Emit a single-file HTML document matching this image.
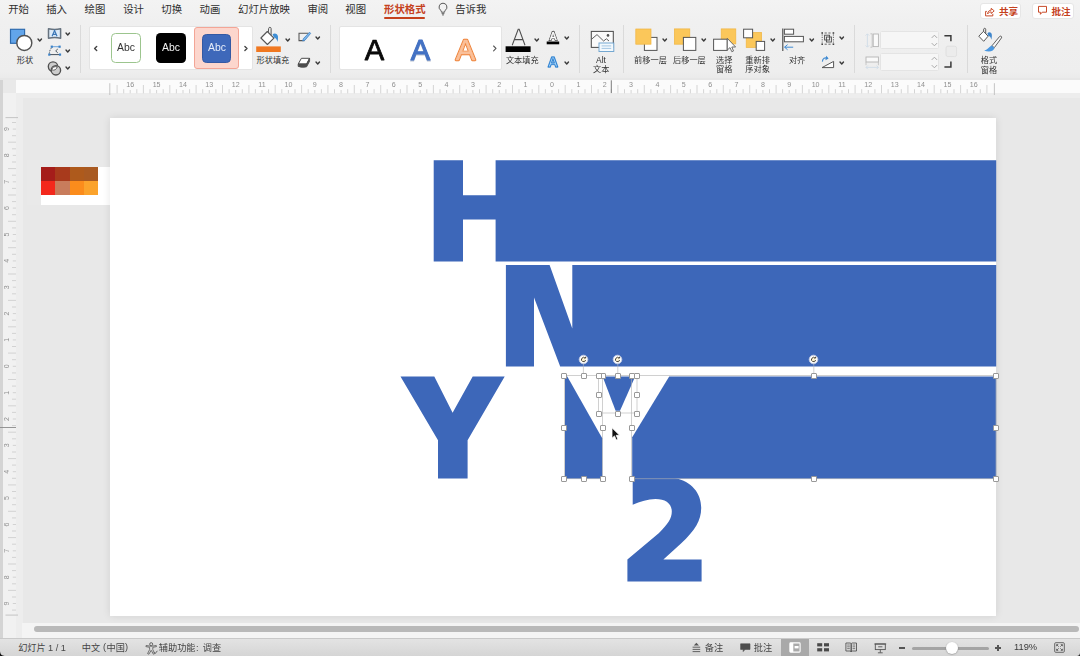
<!DOCTYPE html>
<html lang="zh-CN"><head><meta charset="utf-8"><title>PowerPoint</title>
<style>
*{box-sizing:border-box;margin:0;padding:0}
html,body{width:1080px;height:656px;overflow:hidden;background:#e8e8e8;font-family:"Liberation Sans",sans-serif}
#app{position:relative;width:1080px;height:656px;overflow:hidden;background:#e8e8e8}
.a{position:absolute;display:block}
.l{white-space:nowrap;will-change:transform}
svg.tx{will-change:transform}
svg{overflow:visible}
#tabs{left:0;top:0;width:1080px;height:22px;background:linear-gradient(#f3f3f3,#f0f0f0)}
#ribbon{left:0;top:22px;width:1080px;height:56px;background:linear-gradient(#f0f0f0 0,#eeeeee 88%,#ebebeb 100%)}
#ribbonedge{left:0;top:78.4px;width:1080px;height:1.6px;background:#e7e7e7}
#hruler{left:16px;top:79.9px;width:1064px;height:13.6px;background:#fbfbfb}
#rcorner{left:0;top:79.9px;width:16px;height:13.6px;background:#e9e9e9}
#vruler{left:3px;top:93px;width:13px;height:545px;background:#f1f1f1}
#vedge{left:0;top:80px;width:3px;height:558px;background:#d4d4d4}
#gutter{left:16px;top:93px;width:7px;height:545px;background:#ededed}
#gutterh{left:16px;top:93px;width:1064px;height:5px;background:#ededed}
#canvas{left:22.5px;top:98px;width:1057.5px;height:525.4px;background:#e8e8e8}
#slide{left:110px;top:117.8px;width:886.2px;height:497.9px;background:#fff;box-shadow:0 0 8px rgba(0,0,0,.10);overflow:hidden}
#hscroll{left:22px;top:623.4px;width:1058px;height:15px;background:#f4f4f4}
#hthumb{left:34px;top:626.2px;width:1044.6px;height:6px;border-radius:3px;background:#b9b9b9}
#status{left:0;top:638px;width:1080px;height:18px;background:linear-gradient(#e3e3e3,#d5d5d5);border-top:1px solid #c9c9c9}
.sep{width:1px;background:#dadada;top:25px;height:48px}
.panel{background:#fff;border:1px solid #e4e4e4;border-radius:2px}
.btn{background:#fff;border:1px solid #e6e6e6;border-radius:3px}
.h{width:6px;height:6px;background:#fff;border:1px solid #999;border-radius:1px}
.c{white-space:nowrap;font-family:"Liberation Sans","Noto Sans CJK SC",sans-serif}

</style></head>
<body>
<div id="app">
<div id="tabs" class="a"></div>
<div id="ribbon" class="a"></div>
<div id="ribbonedge" class="a"></div>
<div id="hruler" class="a"></div><div id="rcorner" class="a"></div>
<div id="vedge" class="a"></div><div id="vruler" class="a"></div>
<div id="gutter" class="a"></div><div id="gutterh" class="a"></div>
<div id="canvas" class="a"></div>
<span class="a c" style="left:8.20px;top:3.42px;width:20.80px;height:13.52px;font-size:10.4px;line-height:13.52px;color:#2e2e2e">开始</span>
<span class="a c" style="left:46.20px;top:3.42px;width:20.80px;height:13.52px;font-size:10.4px;line-height:13.52px;color:#2e2e2e">插入</span>
<span class="a c" style="left:84.60px;top:3.42px;width:20.80px;height:13.52px;font-size:10.4px;line-height:13.52px;color:#2e2e2e">绘图</span>
<span class="a c" style="left:123.20px;top:3.42px;width:20.80px;height:13.52px;font-size:10.4px;line-height:13.52px;color:#2e2e2e">设计</span>
<span class="a c" style="left:161.30px;top:3.42px;width:20.80px;height:13.52px;font-size:10.4px;line-height:13.52px;color:#2e2e2e">切换</span>
<span class="a c" style="left:199.60px;top:3.42px;width:20.80px;height:13.52px;font-size:10.4px;line-height:13.52px;color:#2e2e2e">动画</span>
<span class="a c" style="left:238.00px;top:3.42px;width:52.00px;height:13.52px;font-size:10.4px;line-height:13.52px;color:#2e2e2e">幻灯片放映</span>
<span class="a c" style="left:307.40px;top:3.42px;width:20.80px;height:13.52px;font-size:10.4px;line-height:13.52px;color:#2e2e2e">审阅</span>
<span class="a c" style="left:345.30px;top:3.42px;width:20.80px;height:13.52px;font-size:10.4px;line-height:13.52px;color:#2e2e2e">视图</span>
<span class="a c" style="left:384.00px;top:3.42px;width:41.40px;height:13.52px;font-size:10.4px;line-height:13.52px;color:#c5411d;font-weight:bold">形状格式</span>
<div class="a" style="left:384.2px;top:17.3px;width:41.2px;height:2.2px;background:#c5411d;border-radius:1px"></div>
<svg class="a" style="left:437px;top:2.3px" width="12" height="14" viewBox="0 0 12 14"><path d="M6 1.2A3.9 3.9 0 0 0 3.6 8.2C4.2 8.8 4.4 9.4 4.4 10.2H7.6C7.6 9.4 7.8 8.8 8.4 8.2A3.9 3.9 0 0 0 6 1.2Z" fill="none" stroke="#5a5a5a" stroke-width="1"/><path d="M4.6 11.6H7.4M5 12.9H7" stroke="#5a5a5a" stroke-width="0.9" fill="none"/></svg>
<span class="a c" style="left:455.20px;top:3.42px;width:31.20px;height:13.52px;font-size:10.4px;line-height:13.52px;color:#2e2e2e">告诉我</span>
<div class="a btn" style="left:979.6px;top:2.9px;width:41.8px;height:16px"></div>
<div class="a btn" style="left:1032.2px;top:2.9px;width:41.6px;height:16px"></div>
<svg class="a" style="left:984px;top:5.5px" width="12" height="12" viewBox="0 0 12 12"><path d="M2.8 5.4H1.6V9.9H8.8V7.8" fill="none" stroke="#c5411d" stroke-width="0.95"/><path d="M3.6 7.9C3.8 5.5 5.2 4.2 7.2 4.1V2.3L10.2 4.9L7.2 7.5V5.9C5.8 5.9 4.6 6.4 3.6 7.9Z" fill="none" stroke="#c5411d" stroke-width="0.9" stroke-linejoin="round"/></svg>
<span class="a c" style="left:999.00px;top:5.78px;width:19.20px;height:12.48px;font-size:9.6px;line-height:12.48px;color:#c5411d;font-weight:bold">共享</span>
<svg class="a" style="left:1037px;top:5.3px" width="12" height="12" viewBox="0 0 12 12"><path d="M1.5 1.4H9.5V7.2H5.2L3.4 9.3V7.2H1.5Z" fill="none" stroke="#c5411d" stroke-width="0.95" stroke-linejoin="round"/></svg>
<span class="a c" style="left:1051.40px;top:5.78px;width:19.20px;height:12.48px;font-size:9.6px;line-height:12.48px;color:#c5411d;font-weight:bold">批注</span>
<svg class="a tx" style="left:0;top:80px" width="1080" height="16" viewBox="0 80 1080 16"><path d="M117.1 85V93.3M123.7 89.2V93.3M130.2 90V93.3M136.8 89.2V93.3M143.4 85V93.3M150.0 89.2V93.3M156.6 90V93.3M163.2 89.2V93.3M169.8 85V93.3M176.4 89.2V93.3M183.0 90V93.3M189.6 89.2V93.3M196.1 85V93.3M202.7 89.2V93.3M209.3 90V93.3M215.9 89.2V93.3M222.5 85V93.3M229.1 89.2V93.3M235.7 90V93.3M242.3 89.2V93.3M248.9 85V93.3M255.4 89.2V93.3M262.0 90V93.3M268.6 89.2V93.3M275.2 85V93.3M281.8 89.2V93.3M288.4 90V93.3M295.0 89.2V93.3M301.6 85V93.3M308.2 89.2V93.3M314.8 90V93.3M321.4 89.2V93.3M327.9 85V93.3M334.5 89.2V93.3M341.1 90V93.3M347.7 89.2V93.3M354.3 85V93.3M360.9 89.2V93.3M367.5 90V93.3M374.1 89.2V93.3M380.7 85V93.3M387.2 89.2V93.3M393.8 90V93.3M400.4 89.2V93.3M407.0 85V93.3M413.6 89.2V93.3M420.2 90V93.3M426.8 89.2V93.3M433.4 85V93.3M440.0 89.2V93.3M446.6 90V93.3M453.1 89.2V93.3M459.7 85V93.3M466.3 89.2V93.3M472.9 90V93.3M479.5 89.2V93.3M486.1 85V93.3M492.7 89.2V93.3M499.3 90V93.3M505.9 89.2V93.3M512.5 85V93.3M519.0 89.2V93.3M525.6 90V93.3M532.2 89.2V93.3M538.8 85V93.3M545.4 89.2V93.3M552.0 90V93.3M558.6 89.2V93.3M565.2 85V93.3M571.8 89.2V93.3M578.4 90V93.3M585.0 89.2V93.3M591.5 85V93.3M598.1 89.2V93.3M604.7 90V93.3M611.3 89.2V93.3M617.9 85V93.3M624.5 89.2V93.3M631.1 90V93.3M637.7 89.2V93.3M644.3 85V93.3M650.9 89.2V93.3M657.4 90V93.3M664.0 89.2V93.3M670.6 85V93.3M677.2 89.2V93.3M683.8 90V93.3M690.4 89.2V93.3M697.0 85V93.3M703.6 89.2V93.3M710.2 90V93.3M716.8 89.2V93.3M723.3 85V93.3M729.9 89.2V93.3M736.5 90V93.3M743.1 89.2V93.3M749.7 85V93.3M756.3 89.2V93.3M762.9 90V93.3M769.5 89.2V93.3M776.1 85V93.3M782.6 89.2V93.3M789.2 90V93.3M795.8 89.2V93.3M802.4 85V93.3M809.0 89.2V93.3M815.6 90V93.3M822.2 89.2V93.3M828.8 85V93.3M835.4 89.2V93.3M842.0 90V93.3M848.5 89.2V93.3M855.1 85V93.3M861.7 89.2V93.3M868.3 90V93.3M874.9 89.2V93.3M881.5 85V93.3M888.1 89.2V93.3M894.7 90V93.3M901.3 89.2V93.3M907.9 85V93.3M914.5 89.2V93.3M921.0 90V93.3M927.6 89.2V93.3M934.2 85V93.3M940.8 89.2V93.3M947.4 90V93.3M954.0 89.2V93.3M960.6 85V93.3M967.2 89.2V93.3M973.8 90V93.3M980.3 89.2V93.3M986.9 85V93.3" stroke="#cacaca" stroke-width="0.8" fill="none"/><path d="M109.8 83.2V95M994.4 83.2V95" stroke="#c0c0c0" stroke-width="0.9" fill="none"/><text x="130.2" y="86.5" font-size="7.1" fill="#8f8f8f" text-anchor="middle" font-family="Liberation Sans, sans-serif">16</text><text x="156.6" y="86.5" font-size="7.1" fill="#8f8f8f" text-anchor="middle" font-family="Liberation Sans, sans-serif">15</text><text x="183.0" y="86.5" font-size="7.1" fill="#8f8f8f" text-anchor="middle" font-family="Liberation Sans, sans-serif">14</text><text x="209.3" y="86.5" font-size="7.1" fill="#8f8f8f" text-anchor="middle" font-family="Liberation Sans, sans-serif">13</text><text x="235.7" y="86.5" font-size="7.1" fill="#8f8f8f" text-anchor="middle" font-family="Liberation Sans, sans-serif">12</text><text x="262.0" y="86.5" font-size="7.1" fill="#8f8f8f" text-anchor="middle" font-family="Liberation Sans, sans-serif">11</text><text x="288.4" y="86.5" font-size="7.1" fill="#8f8f8f" text-anchor="middle" font-family="Liberation Sans, sans-serif">10</text><text x="314.8" y="86.5" font-size="7.1" fill="#8f8f8f" text-anchor="middle" font-family="Liberation Sans, sans-serif">9</text><text x="341.1" y="86.5" font-size="7.1" fill="#8f8f8f" text-anchor="middle" font-family="Liberation Sans, sans-serif">8</text><text x="367.5" y="86.5" font-size="7.1" fill="#8f8f8f" text-anchor="middle" font-family="Liberation Sans, sans-serif">7</text><text x="393.8" y="86.5" font-size="7.1" fill="#8f8f8f" text-anchor="middle" font-family="Liberation Sans, sans-serif">6</text><text x="420.2" y="86.5" font-size="7.1" fill="#8f8f8f" text-anchor="middle" font-family="Liberation Sans, sans-serif">5</text><text x="446.6" y="86.5" font-size="7.1" fill="#8f8f8f" text-anchor="middle" font-family="Liberation Sans, sans-serif">4</text><text x="472.9" y="86.5" font-size="7.1" fill="#8f8f8f" text-anchor="middle" font-family="Liberation Sans, sans-serif">3</text><text x="499.3" y="86.5" font-size="7.1" fill="#8f8f8f" text-anchor="middle" font-family="Liberation Sans, sans-serif">2</text><text x="525.6" y="86.5" font-size="7.1" fill="#8f8f8f" text-anchor="middle" font-family="Liberation Sans, sans-serif">1</text><text x="552.0" y="86.5" font-size="7.1" fill="#8f8f8f" text-anchor="middle" font-family="Liberation Sans, sans-serif">0</text><text x="578.4" y="86.5" font-size="7.1" fill="#8f8f8f" text-anchor="middle" font-family="Liberation Sans, sans-serif">1</text><text x="604.7" y="86.5" font-size="7.1" fill="#8f8f8f" text-anchor="middle" font-family="Liberation Sans, sans-serif">2</text><text x="631.1" y="86.5" font-size="7.1" fill="#8f8f8f" text-anchor="middle" font-family="Liberation Sans, sans-serif">3</text><text x="657.4" y="86.5" font-size="7.1" fill="#8f8f8f" text-anchor="middle" font-family="Liberation Sans, sans-serif">4</text><text x="683.8" y="86.5" font-size="7.1" fill="#8f8f8f" text-anchor="middle" font-family="Liberation Sans, sans-serif">5</text><text x="710.2" y="86.5" font-size="7.1" fill="#8f8f8f" text-anchor="middle" font-family="Liberation Sans, sans-serif">6</text><text x="736.5" y="86.5" font-size="7.1" fill="#8f8f8f" text-anchor="middle" font-family="Liberation Sans, sans-serif">7</text><text x="762.9" y="86.5" font-size="7.1" fill="#8f8f8f" text-anchor="middle" font-family="Liberation Sans, sans-serif">8</text><text x="789.2" y="86.5" font-size="7.1" fill="#8f8f8f" text-anchor="middle" font-family="Liberation Sans, sans-serif">9</text><text x="815.6" y="86.5" font-size="7.1" fill="#8f8f8f" text-anchor="middle" font-family="Liberation Sans, sans-serif">10</text><text x="842.0" y="86.5" font-size="7.1" fill="#8f8f8f" text-anchor="middle" font-family="Liberation Sans, sans-serif">11</text><text x="868.3" y="86.5" font-size="7.1" fill="#8f8f8f" text-anchor="middle" font-family="Liberation Sans, sans-serif">12</text><text x="894.7" y="86.5" font-size="7.1" fill="#8f8f8f" text-anchor="middle" font-family="Liberation Sans, sans-serif">13</text><text x="921.0" y="86.5" font-size="7.1" fill="#8f8f8f" text-anchor="middle" font-family="Liberation Sans, sans-serif">14</text><text x="947.4" y="86.5" font-size="7.1" fill="#8f8f8f" text-anchor="middle" font-family="Liberation Sans, sans-serif">15</text><text x="973.8" y="86.5" font-size="7.1" fill="#8f8f8f" text-anchor="middle" font-family="Liberation Sans, sans-serif">16</text><path d="M611.3 80.3V93" stroke="#6e6e6e" stroke-width="0.9" fill="none"/></svg>
<svg class="a tx" style="left:0;top:93px" width="23" height="530" viewBox="0 93 23 530"><path d="M12 122.5H16M12.8 129.1H16M12 135.7H16M8 142.2H16M12 148.8H16M12.8 155.4H16M12 162.0H16M8 168.6H16M12 175.2H16M12.8 181.8H16M12 188.4H16M8 195.0H16M12 201.6H16M12.8 208.1H16M12 214.7H16M8 221.3H16M12 227.9H16M12.8 234.5H16M12 241.1H16M8 247.7H16M12 254.3H16M12.8 260.9H16M12 267.5H16M8 274.0H16M12 280.6H16M12.8 287.2H16M12 293.8H16M8 300.4H16M12 307.0H16M12.8 313.6H16M12 320.2H16M8 326.8H16M12 333.4H16M12.8 339.9H16M12 346.5H16M8 353.1H16M12 359.7H16M12.8 366.3H16M12 372.9H16M8 379.5H16M12 386.1H16M12.8 392.7H16M12 399.2H16M8 405.8H16M12 412.4H16M12.8 419.0H16M12 425.6H16M8 432.2H16M12 438.8H16M12.8 445.4H16M12 452.0H16M8 458.6H16M12 465.1H16M12.8 471.7H16M12 478.3H16M8 484.9H16M12 491.5H16M12.8 498.1H16M12 504.7H16M8 511.3H16M12 517.9H16M12.8 524.5H16M12 531.0H16M8 537.6H16M12 544.2H16M12.8 550.8H16M12 557.4H16M8 564.0H16M12 570.6H16M12.8 577.2H16M12 583.8H16M8 590.4H16M12 597.0H16M12.8 603.5H16M12 610.1H16" stroke="#cacaca" stroke-width="0.8" fill="none"/><path d="M5.5 117.6H18M5.5 615.1H18" stroke="#c0c0c0" stroke-width="0.9" fill="none"/><text transform="translate(9.3 603.5) rotate(-90)" font-size="7" fill="#8f8f8f" text-anchor="middle" font-family="Liberation Sans, sans-serif">9</text><text transform="translate(9.3 577.2) rotate(-90)" font-size="7" fill="#8f8f8f" text-anchor="middle" font-family="Liberation Sans, sans-serif">8</text><text transform="translate(9.3 550.8) rotate(-90)" font-size="7" fill="#8f8f8f" text-anchor="middle" font-family="Liberation Sans, sans-serif">7</text><text transform="translate(9.3 524.5) rotate(-90)" font-size="7" fill="#8f8f8f" text-anchor="middle" font-family="Liberation Sans, sans-serif">6</text><text transform="translate(9.3 498.1) rotate(-90)" font-size="7" fill="#8f8f8f" text-anchor="middle" font-family="Liberation Sans, sans-serif">5</text><text transform="translate(9.3 471.7) rotate(-90)" font-size="7" fill="#8f8f8f" text-anchor="middle" font-family="Liberation Sans, sans-serif">4</text><text transform="translate(9.3 445.4) rotate(-90)" font-size="7" fill="#8f8f8f" text-anchor="middle" font-family="Liberation Sans, sans-serif">3</text><text transform="translate(9.3 419.0) rotate(-90)" font-size="7" fill="#8f8f8f" text-anchor="middle" font-family="Liberation Sans, sans-serif">2</text><text transform="translate(9.3 392.7) rotate(-90)" font-size="7" fill="#8f8f8f" text-anchor="middle" font-family="Liberation Sans, sans-serif">1</text><text transform="translate(9.3 366.3) rotate(-90)" font-size="7" fill="#8f8f8f" text-anchor="middle" font-family="Liberation Sans, sans-serif">0</text><text transform="translate(9.3 339.9) rotate(-90)" font-size="7" fill="#8f8f8f" text-anchor="middle" font-family="Liberation Sans, sans-serif">1</text><text transform="translate(9.3 313.6) rotate(-90)" font-size="7" fill="#8f8f8f" text-anchor="middle" font-family="Liberation Sans, sans-serif">2</text><text transform="translate(9.3 287.2) rotate(-90)" font-size="7" fill="#8f8f8f" text-anchor="middle" font-family="Liberation Sans, sans-serif">3</text><text transform="translate(9.3 260.9) rotate(-90)" font-size="7" fill="#8f8f8f" text-anchor="middle" font-family="Liberation Sans, sans-serif">4</text><text transform="translate(9.3 234.5) rotate(-90)" font-size="7" fill="#8f8f8f" text-anchor="middle" font-family="Liberation Sans, sans-serif">5</text><text transform="translate(9.3 208.1) rotate(-90)" font-size="7" fill="#8f8f8f" text-anchor="middle" font-family="Liberation Sans, sans-serif">6</text><text transform="translate(9.3 181.8) rotate(-90)" font-size="7" fill="#8f8f8f" text-anchor="middle" font-family="Liberation Sans, sans-serif">7</text><text transform="translate(9.3 155.4) rotate(-90)" font-size="7" fill="#8f8f8f" text-anchor="middle" font-family="Liberation Sans, sans-serif">8</text><text transform="translate(9.3 129.1) rotate(-90)" font-size="7" fill="#8f8f8f" text-anchor="middle" font-family="Liberation Sans, sans-serif">9</text><path d="M0 427.5H16" stroke="#8a8a8a" stroke-width="0.9" fill="none"/></svg>
<div class="a sep" style="left:80.2px"></div>
<div class="a sep" style="left:330px"></div>
<div class="a sep" style="left:579px"></div>
<div class="a sep" style="left:623px"></div>
<div class="a sep" style="left:854px"></div>
<div class="a sep" style="left:967.2px"></div>
<svg class="a" style="left:8px;top:27px" width="28" height="26" viewBox="0 0 28 26"><rect x="2.5" y="2.3" width="14.1" height="14" fill="#62a5ea" stroke="#2c69ad" stroke-width="1.15"/><circle cx="16.3" cy="15.9" r="7.5" fill="#fff" stroke="#525252" stroke-width="1.45"/></svg>
<svg class="a" style="left:37.15px;top:38.30px" width="5.50" height="4.00" viewBox="-1 -1 5.50 4.00"><path d="M0 0L1.75 2.00L3.50 0" fill="none" stroke="#3a3a3a" stroke-width="1.35" stroke-linecap="round" stroke-linejoin="round"/></svg>
<span class="a c" style="left:16.80px;top:55.61px;width:16.40px;height:10.66px;font-size:8.2px;line-height:10.66px;color:#333">形状</span>
<svg class="a" style="left:47px;top:27px" width="16" height="13" viewBox="0 0 16 13"><path d="M1.5 1.8C5.5 2.8 10 2.8 13.6 1.8V11.2C10 10.3 5.5 10.3 1.5 11.2Z" fill="#dcebf9" stroke="#66727e" stroke-width="1.5" stroke-linejoin="round"/><path d="M5.1 9.3L7.55 3.6L10 9.3M6 7.4H9.1" fill="none" stroke="#3c78b8" stroke-width="1.2"/></svg>
<svg class="a" style="left:65.35px;top:31.90px" width="5.50" height="4.00" viewBox="-1 -1 5.50 4.00"><path d="M0 0L1.75 2.00L3.50 0" fill="none" stroke="#3a3a3a" stroke-width="1.35" stroke-linecap="round" stroke-linejoin="round"/></svg>
<svg class="a" style="left:47px;top:44.5px" width="16" height="12" viewBox="0 0 16 12"><path d="M4.8 2.6C3.2 4 2.4 6.2 2.4 8.6" fill="none" stroke="#4a5560" stroke-width="0.95" stroke-dasharray="1.7 1"/><path d="M10.8 4L8.7 5.9L10.8 7.9" fill="none" stroke="#4a5560" stroke-width="0.95"/><path d="M4.8 1.7H12.6" stroke="#5b9bd8" stroke-width="0.9" fill="none"/><path d="M2.3 9.6H13" stroke="#44505c" stroke-width="1" fill="none"/><g fill="#3c82c8"><rect x="3.7" y="0.6" width="2.2" height="2.2"/><rect x="11.5" y="0.6" width="2.2" height="2.2"/><rect x="1.2" y="8.5" width="2.2" height="2.2"/><rect x="11.9" y="8.5" width="2.2" height="2.2"/></g></svg>
<svg class="a" style="left:65.35px;top:48.80px" width="5.50" height="4.00" viewBox="-1 -1 5.50 4.00"><path d="M0 0L1.75 2.00L3.50 0" fill="none" stroke="#3a3a3a" stroke-width="1.35" stroke-linecap="round" stroke-linejoin="round"/></svg>
<svg class="a" style="left:47px;top:60.5px" width="16" height="16" viewBox="0 0 16 16"><circle cx="6" cy="5.6" r="4.7" fill="#cdcdcd" stroke="#505050" stroke-width="1.35"/><circle cx="8.9" cy="9.3" r="4.7" fill="#cdcdcd" stroke="#505050" stroke-width="1.35"/><path d="M4.6 8.9A4.7 4.7 0 0 1 10.3 5.9A4.7 4.7 0 0 1 4.6 8.9Z" fill="#fff" stroke="#4f4f4f" stroke-width="0.9"/></svg>
<svg class="a" style="left:65.35px;top:66.20px" width="5.50" height="4.00" viewBox="-1 -1 5.50 4.00"><path d="M0 0L1.75 2.00L3.50 0" fill="none" stroke="#3a3a3a" stroke-width="1.35" stroke-linecap="round" stroke-linejoin="round"/></svg>
<div class="a panel" style="left:89.4px;top:26.2px;width:163.2px;height:44px"></div>
<svg class="a" style="left:93.2px;top:44.8px" width="6" height="7" viewBox="0 0 6 7"><path d="M3.7 1.5L1.6 3.5L3.7 5.5" fill="none" stroke="#444" stroke-width="1.4" stroke-linecap="round" stroke-linejoin="round"/></svg>
<svg class="a" style="left:243.2px;top:44.8px" width="6" height="7" viewBox="0 0 6 7"><path d="M1.9 1.5L4 3.5L1.9 5.5" fill="none" stroke="#444" stroke-width="1.4" stroke-linecap="round" stroke-linejoin="round"/></svg>
<div class="a" style="left:110.8px;top:33.3px;width:30px;height:29.4px;background:#fff;border:1px solid #9cc58e;border-radius:4.5px"></div>
<span class="a l" style="left:125.90px;top:42.60px;font-size:10.4px;line-height:10.4px;color:#333;font-weight:normal;transform:translateX(-50%);">Abc</span>
<div class="a" style="left:156.2px;top:33.4px;width:30px;height:29.6px;background:#000;border-radius:4.5px"></div>
<span class="a l" style="left:171.20px;top:42.60px;font-size:10.4px;line-height:10.4px;color:#f4f4f4;font-weight:normal;transform:translateX(-50%);">Abc</span>
<div class="a" style="left:194.2px;top:27.2px;width:44.6px;height:42px;background:#fcd6cd;border:1px solid #f3a596;border-radius:3px"></div>
<div class="a" style="left:201.6px;top:33.6px;width:29.8px;height:29.4px;background:#3e68ba;border:1px solid #3459a3;border-radius:4.5px"></div>
<span class="a l" style="left:216.50px;top:42.60px;font-size:10.4px;line-height:10.4px;color:#e8eefa;font-weight:normal;transform:translateX(-50%);">Abc</span>
<svg class="a" style="left:256px;top:26px" width="26" height="27" viewBox="0 0 26 27"><path d="M12.3 6.2L12.7 2.4C12.9 0.9 15 0.9 15.1 2.5V8.9" fill="none" stroke="#555" stroke-width="1"/><path d="M11.3 5.5L17.9 12.1L11.4 18.5L4.9 12Z" fill="#fff" stroke="#555" stroke-width="1.1" stroke-linejoin="round"/><path d="M16.6 8.3C18.4 6.6 21.6 7.4 22 10.6C22.2 12.4 21.9 14.2 21.5 15.9C20.9 13.4 19.9 12 17.9 11.4Z" fill="#3f8fd6"/><rect x="0.2" y="20.4" width="24.6" height="5.6" fill="#f07821"/></svg>
<svg class="a" style="left:284.95px;top:37.50px" width="5.50" height="4.00" viewBox="-1 -1 5.50 4.00"><path d="M0 0L1.75 2.00L3.50 0" fill="none" stroke="#3a3a3a" stroke-width="1.35" stroke-linecap="round" stroke-linejoin="round"/></svg>
<span class="a c" style="left:256.50px;top:55.61px;width:32.80px;height:10.66px;font-size:8.2px;line-height:10.66px;color:#333">形状填充</span>
<svg class="a" style="left:296.5px;top:30.5px" width="15" height="12" viewBox="0 0 15 12"><path d="M11.5 2.2H2V9.6H7.5" fill="none" stroke="#555" stroke-width="1.05"/><path d="M12.6 1.2L6.4 7.6L5.6 9.9L8 9.2L13.6 2.4Z" fill="#7db6ea" stroke="#3f83c6" stroke-width="0.8" stroke-linejoin="round"/></svg>
<svg class="a" style="left:314.55px;top:36.20px" width="5.50" height="4.00" viewBox="-1 -1 5.50 4.00"><path d="M0 0L1.75 2.00L3.50 0" fill="none" stroke="#3a3a3a" stroke-width="1.35" stroke-linecap="round" stroke-linejoin="round"/></svg>
<svg class="a" style="left:296.5px;top:57px" width="15" height="12" viewBox="0 0 15 12"><path d="M4.4 1.3H12.6L9.6 7H1.2Z" fill="#fff" stroke="#4d4d4d" stroke-width="1" stroke-linejoin="round"/><path d="M1.2 7V9.4Q5.4 11 9.6 9.8L12.6 4.2V1.3L9.6 7Z" fill="#4d4d4d" stroke="#4d4d4d" stroke-width="0.9" stroke-linejoin="round"/></svg>
<svg class="a" style="left:314.55px;top:61.20px" width="5.50" height="4.00" viewBox="-1 -1 5.50 4.00"><path d="M0 0L1.75 2.00L3.50 0" fill="none" stroke="#3a3a3a" stroke-width="1.35" stroke-linecap="round" stroke-linejoin="round"/></svg>
<div class="a panel" style="left:338.6px;top:26.2px;width:163.2px;height:44px"></div>
<svg class="a tx" style="left:0;top:22px" width="1080" height="56" viewBox="0 22 1080 56"><text x="374.4" y="60.2" font-size="29.2" fill="#0a0a0a" stroke="#0a0a0a" stroke-width="0.75" stroke-linejoin="round" text-anchor="middle" font-family="Liberation Sans, sans-serif">A</text><text x="420.4" y="61.1" font-size="29.2" fill="#1f3864" stroke="#1f3864" stroke-width="1" opacity="0.3" text-anchor="middle" font-family="Liberation Sans, sans-serif">A</text><text x="420.4" y="60.2" font-size="29.2" fill="#4472c4" stroke="#4472c4" stroke-width="1.0" stroke-linejoin="round" text-anchor="middle" font-family="Liberation Sans, sans-serif">A</text><text x="465.4" y="60.2" font-size="29.2" fill="#ee8238" stroke="#ee8238" stroke-width="2.3" stroke-linejoin="round" text-anchor="middle" font-family="Liberation Sans, sans-serif">A</text><text x="465.4" y="60.2" font-size="29.2" fill="#fac09a" stroke="#fac09a" stroke-width="0.5" stroke-linejoin="round" text-anchor="middle" font-family="Liberation Sans, sans-serif">A</text></svg>
<svg class="a" style="left:492.4px;top:45.4px" width="6" height="7" viewBox="0 0 6 7"><path d="M1.6 1L4 3.4L1.6 5.8" fill="none" stroke="#555" stroke-width="1.1" stroke-linecap="round" stroke-linejoin="round"/></svg>
<svg class="a" style="left:505px;top:27px" width="27" height="26" viewBox="0 0 27 26"><path d="M7.2 18.2L13.2 2.2H14.2L20 18.2M9.2 12.6H18" fill="none" stroke="#4f4f4f" stroke-width="1.05"/><rect x="0.6" y="19.3" width="25" height="5.7" fill="#000"/></svg>
<svg class="a" style="left:534.15px;top:37.50px" width="5.50" height="4.00" viewBox="-1 -1 5.50 4.00"><path d="M0 0L1.75 2.00L3.50 0" fill="none" stroke="#3a3a3a" stroke-width="1.35" stroke-linecap="round" stroke-linejoin="round"/></svg>
<span class="a c" style="left:505.90px;top:55.61px;width:32.80px;height:10.66px;font-size:8.2px;line-height:10.66px;color:#333">文本填充</span>
<svg class="a tx" style="left:545.5px;top:31px" width="14" height="14" viewBox="0 0 14 14"><text x="7.1" y="9.1" font-size="10.2" fill="none" stroke="#3c3c3c" stroke-width="1.8" stroke-linejoin="miter" text-anchor="middle" font-family="Liberation Sans, sans-serif">A</text><text x="7.1" y="9.1" font-size="10.2" fill="#fff" stroke="#fff" stroke-width="0.45" text-anchor="middle" font-family="Liberation Sans, sans-serif">A</text><rect x="0.7" y="10.5" width="12.5" height="2.8" fill="#000"/></svg>
<svg class="a" style="left:563.95px;top:36.20px" width="5.50" height="4.00" viewBox="-1 -1 5.50 4.00"><path d="M0 0L1.75 2.00L3.50 0" fill="none" stroke="#3a3a3a" stroke-width="1.35" stroke-linecap="round" stroke-linejoin="round"/></svg>
<svg class="a tx" style="left:545.5px;top:56px" width="14" height="13" viewBox="0 0 14 13"><text x="6.9" y="11.2" font-size="14.4" font-weight="bold" fill="#2f86d6" stroke="#2f86d6" stroke-width="1.5" stroke-linejoin="round" opacity="0.35" text-anchor="middle" font-family="Liberation Sans, sans-serif">A</text><text x="6.9" y="11.2" font-size="14.4" font-weight="bold" fill="#a9d6f9" stroke="#2b7fd0" stroke-width="0.9" stroke-linejoin="round" text-anchor="middle" font-family="Liberation Sans, sans-serif">A</text></svg>
<svg class="a" style="left:563.95px;top:61.30px" width="5.50" height="4.00" viewBox="-1 -1 5.50 4.00"><path d="M0 0L1.75 2.00L3.50 0" fill="none" stroke="#3a3a3a" stroke-width="1.35" stroke-linecap="round" stroke-linejoin="round"/></svg>
<svg class="a" style="left:589.5px;top:30px" width="26" height="23" viewBox="0 0 26 23"><rect x="1.3" y="1.4" width="22" height="16" fill="#fafafa" stroke="#4f4f4f" stroke-width="1.05"/><path d="M1.6 9.2L7 4.6L13.6 11L16.4 8.8L19 11" fill="none" stroke="#4f4f4f" stroke-width="0.9"/><circle cx="18" cy="5.4" r="1.3" fill="#4f4f4f"/><rect x="9" y="13" width="14.8" height="8.5" fill="#f3f9fd" stroke="#6fa4cf" stroke-width="0.95"/><path d="M11.6 15.9H21.2M11.6 18.4H21.2" stroke="#8fb9da" stroke-width="0.8"/></svg>
<span class="a l" style="left:601.20px;top:56.09px;font-size:8.4px;line-height:8.4px;color:#2e2e2e;font-weight:normal;transform:translateX(-50%);">Alt</span>
<span class="a c" style="left:593.10px;top:65.41px;width:16.40px;height:10.66px;font-size:8.2px;line-height:10.66px;color:#333">文本</span>
<svg class="a" style="left:634px;top:27px" width="25" height="25" viewBox="0 0 25 25"><rect x="10.4" y="10.4" width="12.6" height="13" fill="#fff" stroke="#555" stroke-width="1"/><rect x="1.8" y="2" width="15.2" height="15.2" fill="#fbc75a" stroke="#f0b440" stroke-width="0.7"/></svg>
<svg class="a" style="left:662.05px;top:38.00px" width="5.50" height="4.00" viewBox="-1 -1 5.50 4.00"><path d="M0 0L1.75 2.00L3.50 0" fill="none" stroke="#3a3a3a" stroke-width="1.35" stroke-linecap="round" stroke-linejoin="round"/></svg>
<span class="a c" style="left:634.10px;top:55.61px;width:32.80px;height:10.66px;font-size:8.2px;line-height:10.66px;color:#333">前移一层</span>
<svg class="a" style="left:673px;top:27px" width="25" height="25" viewBox="0 0 25 25"><rect x="1.4" y="1.9" width="15.4" height="15.3" fill="#fbc75a" stroke="#f0b440" stroke-width="0.7"/><rect x="10.4" y="10.4" width="12.4" height="13" fill="#fff" stroke="#555" stroke-width="1"/></svg>
<svg class="a" style="left:701.35px;top:37.90px" width="5.50" height="4.00" viewBox="-1 -1 5.50 4.00"><path d="M0 0L1.75 2.00L3.50 0" fill="none" stroke="#3a3a3a" stroke-width="1.35" stroke-linecap="round" stroke-linejoin="round"/></svg>
<span class="a c" style="left:673.00px;top:55.61px;width:32.80px;height:10.66px;font-size:8.2px;line-height:10.66px;color:#333">后移一层</span>
<svg class="a" style="left:712px;top:27px" width="26" height="26" viewBox="0 0 26 26"><rect x="9.2" y="1.9" width="14.6" height="15" fill="#fbc75a" stroke="#f0b440" stroke-width="0.7"/><rect x="1.6" y="12.2" width="13.6" height="11.2" fill="#fff" stroke="#555" stroke-width="1"/><path d="M15.3 11.3V23L18 20.6L19.8 24.7L21.5 24L19.8 20H23.6Z" fill="#fff" stroke="#666" stroke-width="0.95" stroke-linejoin="round"/></svg>
<span class="a c" style="left:716.00px;top:55.61px;width:16.40px;height:10.66px;font-size:8.2px;line-height:10.66px;color:#333">选择</span>
<span class="a c" style="left:716.00px;top:65.41px;width:16.40px;height:10.66px;font-size:8.2px;line-height:10.66px;color:#333">窗格</span>
<svg class="a" style="left:742px;top:27px" width="25" height="25" viewBox="0 0 25 25"><rect x="4.2" y="5.4" width="15.4" height="15" fill="#fbc75a" stroke="#f0b440" stroke-width="0.7"/><rect x="1.6" y="2.2" width="9" height="8.6" fill="#fff" stroke="#555" stroke-width="1"/><rect x="14.2" y="14.4" width="8.4" height="9" fill="#fff" stroke="#555" stroke-width="1"/></svg>
<svg class="a" style="left:769.95px;top:37.90px" width="5.50" height="4.00" viewBox="-1 -1 5.50 4.00"><path d="M0 0L1.75 2.00L3.50 0" fill="none" stroke="#3a3a3a" stroke-width="1.35" stroke-linecap="round" stroke-linejoin="round"/></svg>
<span class="a c" style="left:745.30px;top:55.61px;width:24.60px;height:10.66px;font-size:8.2px;line-height:10.66px;color:#333">重新排</span>
<span class="a c" style="left:745.30px;top:65.41px;width:24.60px;height:10.66px;font-size:8.2px;line-height:10.66px;color:#333">序对象</span>
<svg class="a" style="left:781px;top:27px" width="25" height="26" viewBox="0 0 25 26"><path d="M1.8 1.6V24" stroke="#444" stroke-width="1.1"/><rect x="3.4" y="2.2" width="9.2" height="5" fill="#fff" stroke="#555" stroke-width="1"/><rect x="3.4" y="9.4" width="19" height="5.4" fill="#fff" stroke="#555" stroke-width="1"/><path d="M12.2 20.2H3.6M6.6 17.6L3.6 20.2L6.6 22.8" fill="none" stroke="#3f8ad2" stroke-width="1"/></svg>
<svg class="a" style="left:809.35px;top:37.80px" width="5.50" height="4.00" viewBox="-1 -1 5.50 4.00"><path d="M0 0L1.75 2.00L3.50 0" fill="none" stroke="#3a3a3a" stroke-width="1.35" stroke-linecap="round" stroke-linejoin="round"/></svg>
<span class="a c" style="left:788.90px;top:55.61px;width:16.40px;height:10.66px;font-size:8.2px;line-height:10.66px;color:#333">对齐</span>
<svg class="a" style="left:820px;top:31px" width="16" height="15" viewBox="0 0 16 15"><path d="M2.2 3.4V11.6M13.4 3.4V11.6" fill="none" stroke="#555" stroke-width="0.9" stroke-dasharray="1.2 1.2"/><path d="M4.6 2H11M4.6 13.2H11" fill="none" stroke="#555" stroke-width="0.9" stroke-dasharray="2.2 1.6"/><rect x="4.6" y="4.2" width="5" height="4.8" fill="none" stroke="#4a4a4a" stroke-width="0.9"/><rect x="6.4" y="6" width="5" height="5" fill="none" stroke="#4a4a4a" stroke-width="0.9"/><g fill="#444"><rect x="1.4" y="1.2" width="1.6" height="1.6"/><rect x="12.6" y="1.2" width="1.6" height="1.6"/><rect x="1.4" y="12.4" width="1.6" height="1.6"/><rect x="12.6" y="12.4" width="1.6" height="1.6"/></g></svg>
<svg class="a" style="left:839.05px;top:36.00px" width="5.50" height="4.00" viewBox="-1 -1 5.50 4.00"><path d="M0 0L1.75 2.00L3.50 0" fill="none" stroke="#3a3a3a" stroke-width="1.35" stroke-linecap="round" stroke-linejoin="round"/></svg>
<svg class="a" style="left:820px;top:55px" width="16" height="14" viewBox="0 0 16 14"><path d="M2 12.6H13.6V6.4Z" fill="#fff" stroke="#555" stroke-width="1" stroke-linejoin="round"/><path d="M2.4 6.6C2.6 3.4 5 2.2 7.4 3.2" fill="none" stroke="#3f8ad2" stroke-width="1.1"/><path d="M6.2 0.8L8.6 3.6L5.4 5.2Z" fill="#3f8ad2"/></svg>
<svg class="a" style="left:839.05px;top:60.90px" width="5.50" height="4.00" viewBox="-1 -1 5.50 4.00"><path d="M0 0L1.75 2.00L3.50 0" fill="none" stroke="#3a3a3a" stroke-width="1.35" stroke-linecap="round" stroke-linejoin="round"/></svg>
<div class="a" style="left:880.2px;top:31.4px;width:58.8px;height:17.8px;background:#f6f6f6;border:1px solid #e4e4e4;border-radius:1.5px"></div>
<svg class="a" style="left:931px;top:34.0px" width="7" height="13" viewBox="0 0 7 13"><path d="M1 3.6L3.4 1.2L5.8 3.6M1 9.4L3.4 11.8L5.8 9.4" fill="none" stroke="#a9a9a9" stroke-width="1" stroke-linecap="round" stroke-linejoin="round"/></svg>
<div class="a" style="left:880.2px;top:53.3px;width:58.8px;height:17.8px;background:#f6f6f6;border:1px solid #e4e4e4;border-radius:1.5px"></div>
<svg class="a" style="left:931px;top:55.9px" width="7" height="13" viewBox="0 0 7 13"><path d="M1 3.6L3.4 1.2L5.8 3.6M1 9.4L3.4 11.8L5.8 9.4" fill="none" stroke="#a9a9a9" stroke-width="1" stroke-linecap="round" stroke-linejoin="round"/></svg>
<svg class="a" style="left:865px;top:33px" width="15" height="15" viewBox="0 0 15 15"><path d="M2.4 1V14M0.6 2.6L2.4 0.8L4.2 2.6M0.6 12.4L2.4 14.2L4.2 12.4" fill="none" stroke="#cfdbe6" stroke-width="0.9"/><path d="M5.4 0.8H7.2V14.2H5.4" fill="none" stroke="#bdbdbd" stroke-width="0.8"/><rect x="8.2" y="1" width="5.2" height="12.6" fill="#fafafa" stroke="#b4b4b4" stroke-width="0.9"/></svg>
<svg class="a" style="left:865px;top:55.5px" width="15" height="15" viewBox="0 0 15 15"><rect x="1" y="1" width="12.4" height="5" fill="#fafafa" stroke="#b4b4b4" stroke-width="0.9"/><path d="M1 6V9.2M13.4 6V9.2" fill="none" stroke="#bdbdbd" stroke-width="0.8"/><path d="M1 11.4H13.4M2.8 9.6L1 11.4L2.8 13.2M11.6 9.6L13.4 11.4L11.6 13.2" fill="none" stroke="#cfdbe6" stroke-width="0.9"/></svg>
<svg class="a" style="left:943px;top:34px" width="16" height="36" viewBox="0 0 16 36"><path d="M1.4 1.7H7.9V7.2M1.4 33.1H7.9V27.6" fill="none" stroke="#3a3a3a" stroke-width="1.5"/><rect x="3" y="12.2" width="10.6" height="10.4" rx="2" fill="#ececec" stroke="#dcdcdc" stroke-width="0.8"/></svg>
<svg class="a" style="left:977px;top:27px" width="27" height="27" viewBox="0 0 27 27"><path d="M6.5 5L6.7 2.1C6.9 1 8.6 1 8.7 2.2V7" fill="none" stroke="#555" stroke-width="0.95"/><path d="M6.5 4.3L11.1 9.2L6.7 14.3L1.8 9.2Z" fill="#fff" stroke="#555" stroke-width="1" stroke-linejoin="round"/><path d="M10.4 6.4C11.6 4.6 14.4 5 14.8 7.6C15 9.4 14.7 11.2 14.3 12.7C13.9 10.6 13.1 9.3 11.2 8.8Z" fill="#3f86cc"/><path d="M22.6 9.5C23.8 8.4 25.3 9.8 24.4 11L17.3 20.7L14.9 18.8Z" fill="#f7f7f7" stroke="#585858" stroke-width="0.95" stroke-linejoin="round"/><path d="M14.5 18.5L17.5 20.9C16.9 23.5 13.4 25.7 7.2 23.7C10.4 22.7 11.6 20.4 14.5 18.5Z" fill="#4a97e0"/></svg>
<span class="a c" style="left:980.80px;top:55.91px;width:16.40px;height:10.66px;font-size:8.2px;line-height:10.66px;color:#333">格式</span>
<span class="a c" style="left:980.80px;top:65.71px;width:16.40px;height:10.66px;font-size:8.2px;line-height:10.66px;color:#333">窗格</span>
<div class="a" style="left:27px;top:160px;width:83px;height:44.5px;background:#e9e9e9"></div>
<div class="a" style="left:41px;top:167px;width:69px;height:37.5px;background:#fff"></div>
<div class="a" style="left:41.00px;top:167.0px;width:14.5px;height:14px;background:#a51d1a"></div>
<div class="a" style="left:55.25px;top:167.0px;width:14.5px;height:14px;background:#a83a1c"></div>
<div class="a" style="left:69.50px;top:167.0px;width:14.5px;height:14px;background:#ae5a1c"></div>
<div class="a" style="left:83.75px;top:167.0px;width:14.5px;height:14px;background:#a95a22"></div>
<div class="a" style="left:41.00px;top:181.0px;width:14.5px;height:14px;background:#f3281c"></div>
<div class="a" style="left:55.25px;top:181.0px;width:14.5px;height:14px;background:#c87c5c"></div>
<div class="a" style="left:69.50px;top:181.0px;width:14.5px;height:14px;background:#fb8c1c"></div>
<div class="a" style="left:83.75px;top:181.0px;width:14.5px;height:14px;background:#fba32c"></div>
<div id="slide" class="a"></div>
<svg class="a" style="left:0;top:0" width="1080" height="656" viewBox="0 0 1080 656"><defs><clipPath id="sc"><rect x="110" y="117.8" width="886.2" height="497.9"/></clipPath></defs><g clip-path="url(#sc)" fill="#3d67b9"><path d="M433.7 160.2H463V195.3H495.6V160.2H1000V261.4H495.6V219.6H463V261.4H433.7Z"/><path d="M505.9 264.9H549.6L572.3 328.5V264.9H1000V366.5H560.2L534 297.6V366.5H505.9Z"/><path d="M400.5 376.6H434.3L452.6 412.8L472.7 376.6H504.7L467.6 440.3V478.4H438V440.3Z"/><path d="M565 376.5H567.3L602.4 438.6V478.8H565Z"/><path d="M602.6 376.6H635.2L620 410.8H615.6Z"/><path d="M669.2 376.5H1000V478.8H632.2V437.2Z"/><path d="M632.7 478V504.7C640 501.5 648 499 655.5 499C665.5 499 671.8 503.5 671.8 511.5C671.8 518.5 668 524 659 533L627.4 559.4V581.6H701.6V559.6H663.4L681 543.5C695.5 530 701.2 520.5 701.2 507.5C701.2 493 691.5 481.5 675 478Z"/></g></svg>
<svg class="a" style="left:0;top:0" width="1080" height="656" viewBox="0 0 1080 656"><g fill="none" stroke="#b2b2b2" stroke-width="0.6"><rect x="564.4" y="375.4" width="38.2" height="103.4"/><rect x="598.7" y="375.4" width="38.3" height="37.6"/><rect x="631.6" y="375.4" width="364.4" height="103.4"/><path d="M583.4 363.5V375.4M617.8 363.5V375.4M813.8 363.5V375.4"/></g></svg>
<div class="a h" style="left:561.4px;top:373.0px"></div>
<div class="a h" style="left:580.5px;top:373.0px"></div>
<div class="a h" style="left:599.6px;top:373.0px"></div>
<div class="a h" style="left:561.4px;top:424.7px"></div>
<div class="a h" style="left:599.6px;top:424.7px"></div>
<div class="a h" style="left:561.4px;top:476.4px"></div>
<div class="a h" style="left:580.5px;top:476.4px"></div>
<div class="a h" style="left:599.6px;top:476.4px"></div>
<svg class="a" style="left:578.0px;top:354.2px" width="11" height="11" viewBox="-5.5 -5.5 11 11"><circle r="4.3" fill="#fff" stroke="#c3cbe2" stroke-width="0.9"/><circle r="1.9" fill="#fdf2cf"/><path d="M1.7 -1.2A2.1 2.1 0 1 0 2.1 0.5" fill="none" stroke="#4a4438" stroke-width="1"/><path d="M0.5 -1.2H2.6V-3.2Z" fill="#4a4438"/></svg>
<div class="a h" style="left:595.7px;top:373.0px"></div>
<div class="a h" style="left:614.9px;top:373.0px"></div>
<div class="a h" style="left:634.0px;top:373.0px"></div>
<div class="a h" style="left:595.7px;top:391.8px"></div>
<div class="a h" style="left:634.0px;top:391.8px"></div>
<div class="a h" style="left:595.7px;top:410.6px"></div>
<div class="a h" style="left:614.9px;top:410.6px"></div>
<div class="a h" style="left:634.0px;top:410.6px"></div>
<svg class="a" style="left:612.4px;top:354.2px" width="11" height="11" viewBox="-5.5 -5.5 11 11"><circle r="4.3" fill="#fff" stroke="#c3cbe2" stroke-width="0.9"/><circle r="1.9" fill="#fdf2cf"/><path d="M1.7 -1.2A2.1 2.1 0 1 0 2.1 0.5" fill="none" stroke="#4a4438" stroke-width="1"/><path d="M0.5 -1.2H2.6V-3.2Z" fill="#4a4438"/></svg>
<div class="a h" style="left:628.6px;top:373.0px"></div>
<div class="a h" style="left:810.8px;top:373.0px"></div>
<div class="a h" style="left:993.0px;top:373.0px"></div>
<div class="a h" style="left:628.6px;top:424.7px"></div>
<div class="a h" style="left:993.0px;top:424.7px"></div>
<div class="a h" style="left:628.6px;top:476.4px"></div>
<div class="a h" style="left:810.8px;top:476.4px"></div>
<div class="a h" style="left:993.0px;top:476.4px"></div>
<svg class="a" style="left:808.3px;top:354.2px" width="11" height="11" viewBox="-5.5 -5.5 11 11"><circle r="4.3" fill="#fff" stroke="#c3cbe2" stroke-width="0.9"/><circle r="1.9" fill="#fdf2cf"/><path d="M1.7 -1.2A2.1 2.1 0 1 0 2.1 0.5" fill="none" stroke="#4a4438" stroke-width="1"/><path d="M0.5 -1.2H2.6V-3.2Z" fill="#4a4438"/></svg>
<svg class="a" style="left:611px;top:427px" width="10" height="14" viewBox="0 0 10 14"><path d="M1 0.8V11.2L3.5 8.9L5.2 12.9L6.9 12.2L5.2 8.3H8.6Z" fill="#111" stroke="#fff" stroke-width="0.8" stroke-linejoin="round"/></svg>
<div id="hscroll" class="a"></div><div id="hthumb" class="a"></div>
<div id="status" class="a"></div>
<span class="a c" style="left:18.20px;top:642.86px;width:27.60px;height:11.96px;font-size:9.2px;line-height:11.96px;color:#454545">幻灯片</span>
<span class="a l" style="left:48.30px;top:643.61px;font-size:9.2px;line-height:9.2px;color:#454545;font-weight:normal;">1 / 1</span>
<span class="a c" style="left:81.80px;top:642.86px;width:18.40px;height:11.96px;font-size:9.2px;line-height:11.96px;color:#454545">中文</span>
<span class="a l" style="left:103.20px;top:643.41px;font-size:9.2px;line-height:9.2px;color:#454545;font-weight:normal;">(</span>
<span class="a c" style="left:106.60px;top:642.86px;width:18.40px;height:11.96px;font-size:9.2px;line-height:11.96px;color:#454545">中国</span>
<span class="a l" style="left:125.40px;top:643.41px;font-size:9.2px;line-height:9.2px;color:#454545;font-weight:normal;">)</span>
<svg class="a" style="left:144.5px;top:641.5px" width="13" height="13" viewBox="0 0 13 13"><circle cx="6.2" cy="2.2" r="1.5" fill="none" stroke="#555" stroke-width="0.9"/><path d="M0.9 4.6L4.6 5.3V7.6L2.6 11.6L3.9 12.2L6.2 8.3L8.4 12.2L9.7 11.6L7.8 7.6V5.3L11.5 4.6L11.3 3.5L6.2 4.3L1.1 3.5Z" fill="none" stroke="#555" stroke-width="0.8" stroke-linejoin="round"/><path d="M9 10.2L10.2 11.5L12.4 8.8" fill="none" stroke="#555" stroke-width="0.9"/></svg>
<span class="a c" style="left:158.80px;top:642.86px;width:36.80px;height:11.96px;font-size:9.2px;line-height:11.96px;color:#454545">辅助功能</span>
<span class="a l" style="left:195.80px;top:643.51px;font-size:9.2px;line-height:9.2px;color:#454545;font-weight:normal;">:</span>
<span class="a c" style="left:202.80px;top:642.86px;width:18.40px;height:11.96px;font-size:9.2px;line-height:11.96px;color:#454545">调查</span>
<svg class="a" style="left:691.5px;top:641.5px" width="9" height="11" viewBox="0 0 9 11"><path d="M0.6 5.2H8.2M0.6 7.4H8.2M0.6 9.6H8.2" stroke="#555" stroke-width="0.9" fill="none"/><path d="M4.4 0.8L7 3.6H1.8Z" fill="#555"/></svg>
<span class="a c" style="left:704.80px;top:642.86px;width:18.40px;height:11.96px;font-size:9.2px;line-height:11.96px;color:#454545">备注</span>
<svg class="a" style="left:739.8px;top:643px" width="11" height="10" viewBox="0 0 11 10"><path d="M0.6 0.8H10V6.4H5L3.2 8.6V6.4H0.6Z" fill="#4d4d4d" stroke="#4d4d4d" stroke-width="0.6" stroke-linejoin="round"/></svg>
<span class="a c" style="left:753.80px;top:642.86px;width:18.40px;height:11.96px;font-size:9.2px;line-height:11.96px;color:#454545">批注</span>
<div class="a" style="left:781px;top:639px;width:28.2px;height:17px;background:#a9a9a9"></div>
<svg class="a" style="left:789px;top:642px" width="12" height="11" viewBox="0 0 12 11"><rect x="0.9" y="0.9" width="10.2" height="9.2" rx="0.8" fill="none" stroke="#fff" stroke-width="1.1"/><rect x="0.9" y="0.9" width="3.4" height="9.2" fill="#fff"/><rect x="5.6" y="4" width="4" height="2.4" fill="#fff"/></svg>
<svg class="a" style="left:817px;top:643px" width="13" height="9" viewBox="0 0 13 9"><g fill="#4a4a4a"><rect x="0.2" y="0.2" width="5" height="3.2"/><rect x="7" y="0.2" width="5" height="3.2"/><rect x="0.2" y="5.2" width="5" height="3.2"/><rect x="7" y="5.2" width="5" height="3.2"/></g></svg>
<svg class="a" style="left:845px;top:642px" width="13" height="11" viewBox="0 0 13 11"><path d="M0.9 1H5.2Q6.2 1.2 6.2 2.2V10Q6.2 9 5.2 9H0.9ZM11.5 1H7.2Q6.2 1.2 6.2 2.2V10Q6.2 9 7.2 9H11.5Z" fill="none" stroke="#555" stroke-width="0.9" stroke-linejoin="round"/><path d="M2.2 3H4.8M2.2 4.8H4.8M2.2 6.6H4.8M7.6 3H10.2M7.6 4.8H10.2M7.6 6.6H10.2" stroke="#555" stroke-width="0.7"/></svg>
<svg class="a" style="left:873.5px;top:642.6px" width="13" height="11" viewBox="0 0 13 11"><path d="M0.4 1H12.2" stroke="#555" stroke-width="1"/><rect x="1.3" y="1" width="10" height="5.6" fill="none" stroke="#555" stroke-width="0.9"/><path d="M6.3 6.6V9.6M3.9 9.8H8.7M4.2 3.8H8.4" stroke="#555" stroke-width="0.9" fill="none"/></svg>
<div class="a" style="left:899.4px;top:647.2px;width:5.8px;height:1.7px;background:#555"></div>
<div class="a" style="left:912px;top:646.6px;width:76.6px;height:3px;border-radius:1.5px;background:#a4a4a4"></div>
<div class="a" style="left:946px;top:642px;width:12.2px;height:12.2px;border-radius:50%;background:#fff;box-shadow:0 0.5px 1.5px rgba(0,0,0,.35)"></div>
<div class="a" style="left:995.4px;top:647.2px;width:5.8px;height:1.7px;background:#555"></div>
<div class="a" style="left:997.45px;top:645.15px;width:1.7px;height:5.8px;background:#555"></div>
<span class="a l" style="left:1014.40px;top:643.13px;font-size:9.3px;line-height:9.3px;color:#3a3a3a;font-weight:normal;">119%</span>
<svg class="a" style="left:1053.6px;top:642.3px" width="11" height="11" viewBox="0 0 11 11"><rect x="0.7" y="0.7" width="9.6" height="9.6" rx="1" fill="none" stroke="#5a5a5a" stroke-width="0.9"/><path d="M2.2 2.2H4.6L2.2 4.6ZM8.8 2.2V4.6L6.4 2.2ZM8.8 8.8H6.4L8.8 6.4ZM2.2 8.8V6.4L4.6 8.8Z" fill="#555"/><path d="M3 3L4.7 4.7M8 3L6.3 4.7M8 8L6.3 6.3M3 8L4.7 6.3" stroke="#555" stroke-width="0.8"/></svg>
<svg class="a" style="left:0;top:651px" width="5" height="5" viewBox="0 0 5 5"><path d="M0 0.3Q0.3 4.7 4.7 5H0Z" fill="#151515"/></svg>
<svg class="a" style="left:1077px;top:653px" width="3" height="3" viewBox="0 0 3 3"><path d="M3 0.2Q2.8 2.8 0.2 3H3Z" fill="#222"/></svg>
</div>
</body></html>
